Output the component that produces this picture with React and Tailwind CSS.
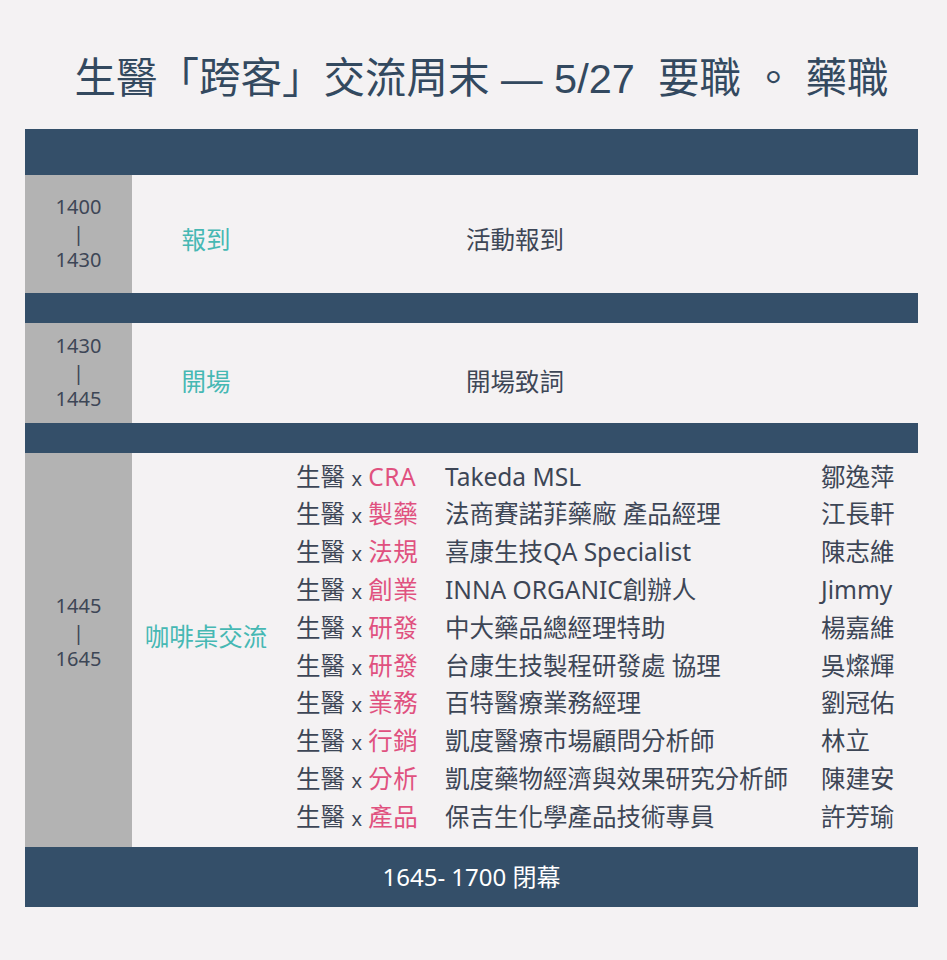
import React from "react";

const items = [
  ["CRA", "Takeda MSL", "鄒逸萍"],
  ["製藥", "法商賽諾菲藥廠 產品經理", "江長軒"],
  ["法規", "喜康生技QA Specialist", "陳志維"],
  ["創業", "INNA ORGANIC創辦人", "Jimmy"],
  ["研發", "中大藥品總經理特助", "楊嘉維"],
  ["研發", "台康生技製程研發處 協理", "吳燦輝"],
  ["業務", "百特醫療業務經理", "劉冠佑"],
  ["行銷", "凱度醫療市場顧問分析師", "林立"],
  ["分析", "凱度藥物經濟與效果研究分析師", "陳建安"],
  ["產品", "保吉生化學產品技術專員", "許芳瑜"],
];

const body = { fontFamily: '"Noto Sans", "Noto Sans CJK TC", sans-serif' };

function Times({ a, b, className = "" }) {
  return (
    <div className={"w-[107px] shrink-0 bg-[#b3b3b3] flex flex-col items-center justify-center text-[20px] leading-[26.5px] text-[#3d4656] " + className}>
      <span>{a}</span>
      <span>|</span>
      <span>{b}</span>
    </div>
  );
}

export default function App() {
  return (
    <div className="w-[947px] h-[960px] bg-[#f4f2f3] overflow-hidden" style={body}>
      <h1
        className="h-[129px] pt-[54px] pl-[16px] text-center text-[41.5px] leading-[50px] text-[#33495f] whitespace-pre"
        style={{ fontFamily: '"Liberation Sans", "Noto Sans CJK TC", sans-serif' }}
      >
        生醫「跨客」交流周末 — 5/27  要職 。 藥職
      </h1>
      <div className="ml-[25px] w-[893px]">
        <div className="h-[46px] bg-[#344f69]" />
        <div className="flex h-[118px]">
          <Times a="1400" b="1430" />
          <div className="w-[148px] flex items-center justify-center pt-[12px] text-[24.5px] text-[#46b8b3]">報到</div>
          <div className="flex items-center pt-[12px] pl-[186px] text-[24.5px] text-[#3d4656]">活動報到</div>
        </div>
        <div className="h-[30px] bg-[#344f69]" />
        <div className="flex h-[100px]">
          <Times a="1430" b="1445" />
          <div className="w-[148px] flex items-center justify-center pt-[18px] text-[24.5px] text-[#46b8b3]">開場</div>
          <div className="flex items-center pt-[18px] pl-[186px] text-[24.5px] text-[#3d4656]">開場致詞</div>
        </div>
        <div className="h-[30px] bg-[#344f69]" />
        <div className="flex h-[394px]">
          <Times a="1445" b="1645" className="pb-[34px]" />
          <div className="w-[148px] flex items-center justify-center pb-[26px] text-[24.5px] text-[#46b8b3]">咖啡桌交流</div>
          <div className="flex flex-col pt-[5px] pl-[16px] text-[24.5px] text-[#3d4656]">
            {items.map(([tag, org, name], i) => (
              <div key={i} className="flex items-center h-[37.8px]">
                <div className="w-[149px] shrink-0 whitespace-nowrap">
                  生醫 <span className="text-[20px]">x</span> <span className="text-[#e0517f] tracking-[0.5px]">{tag}</span>
                </div>
                <div className="w-[376px] shrink-0 whitespace-nowrap">{org}</div>
                <div className="whitespace-nowrap">{name}</div>
              </div>
            ))}
          </div>
        </div>
        <div className="h-[60px] bg-[#344f69] flex items-center justify-center text-[24px] text-white">
          1645- 1700 閉幕
        </div>
      </div>
    </div>
  );
}
